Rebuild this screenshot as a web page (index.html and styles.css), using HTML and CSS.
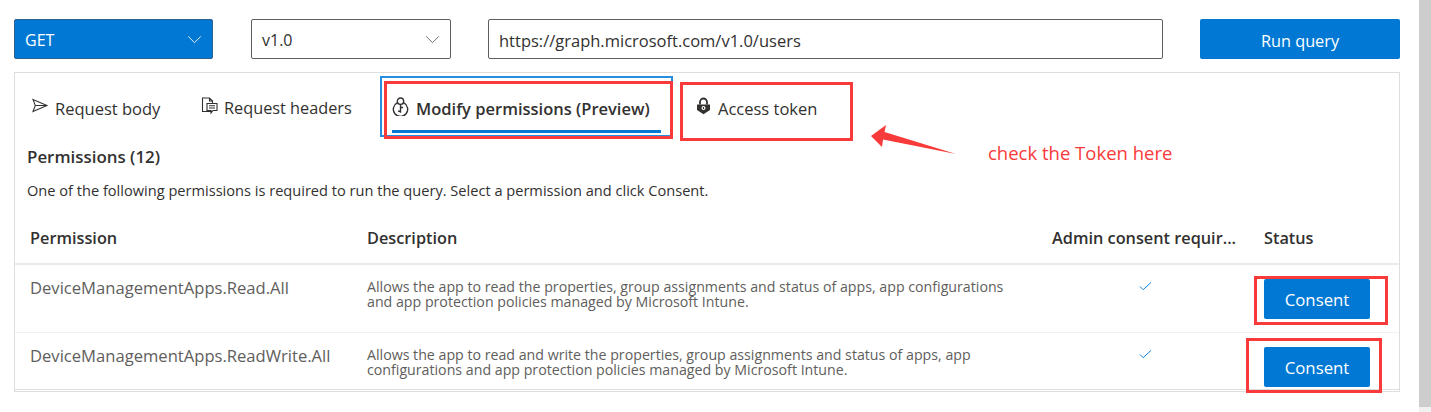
FILE: index.html
```html
<!DOCTYPE html>
<html lang="en">
<head>
<meta charset="utf-8">
<title>Graph Explorer</title>
<link rel="stylesheet" href="styles.css">
</head>
<body>
<div class="page">
  <main class="main">
    <div class="toolbar">
      <div class="select select-get"><span>GET</span><svg class="chev" viewBox="0 0 16 10"><path d="M1 1.5l7 7 7-7"/></svg></div>
      <div class="select select-ver"><span>v1.0</span><svg class="chev" viewBox="0 0 16 10"><path d="M1 1.5l7 7 7-7"/></svg></div>
      <div class="url">https://graph.microsoft.com/v1.0/users</div>
      <button class="run">Run query</button>
    </div>
    <section class="panel">
      <nav class="tabs">
        <div class="tab tab-body"><svg class="ico" viewBox="0 0 18 16"><path d="M1.500 1.500L16.500 8 1.500 14.500 4 8zM4 8h12.500"/></svg>Request body</div>
        <div class="tab tab-head"><svg class="ico" viewBox="0 0 17 17"><path d="M11 14.500H1.500V1h7l3 3v2M8.500 1v3h3M6 6.500h10v7h-4l-2 2.500v-2.500H6zM8 8.800h6M8 11h6"/></svg>Request headers</div>
        <div class="tab tab-perm"><svg class="ico ico-perm" viewBox="0 0 16 18"><path d="M4.800 5.600a6.800 6.800 0 1 0 6.400 0"/><circle cx="8" cy="4" r="3"/><path d="M8 7v8M8 10h2.300M8 13.500H5.700"/></svg>Modify permissions (Preview)</div>
        <div class="tab tab-token"><svg class="ico ico-lock" viewBox="0 0 15 17"><path class="solid" d="M1 7h13v5.500L7.500 16.700 1 12.500z"/><path d="M4 7V4.500a3.500 3.500 0 0 1 7 0V7"/><circle class="hole" cx="7.500" cy="10.500" r="2"/><path class="key" d="M7.500 9.500v2"/></svg>Access token</div>
      </nav>
      <h2 class="title">Permissions (12)</h2>
      <p class="hint">One of the following permissions is required to run the query. Select a permission and click Consent.</p>
      <div class="row row-head">
        <div class="c-perm">Permission</div>
        <div class="c-desc">Description</div>
        <div class="c-admin">Admin consent requir...</div>
        <div class="c-status">Status</div>
      </div>
      <div class="row row-data">
        <div class="c-perm">DeviceManagementApps.Read.All</div>
        <div class="c-desc">Allows the app to read the properties, group assignments and status of apps, app configurations and app protection policies managed by Microsoft Intune.</div>
        <div class="c-admin"><svg class="check" viewBox="0 0 14 10"><path d="M1 5.500l3.500 3.500L13 1"/></svg></div>
        <div class="c-status"><button class="consent">Consent</button></div>
      </div>
      <div class="row row-data row-last">
        <div class="c-perm">DeviceManagementApps.ReadWrite.All</div>
        <div class="c-desc">Allows the app to read and write the properties, group assignments and status of apps, app configurations and app protection policies managed by Microsoft Intune.</div>
        <div class="c-admin"><svg class="check" viewBox="0 0 14 10"><path d="M1 5.500l3.500 3.500L13 1"/></svg></div>
        <div class="c-status"><button class="consent">Consent</button></div>
      </div>
    </section>
  </main>
  <div class="scrollbar"><div class="thumb"></div></div>

  <div class="mark mark-blue"></div>
  <div class="mark mark-perm"></div>
  <div class="mark mark-token"></div>
  <div class="mark mark-c1"></div>
  <div class="mark mark-c2"></div>
  <svg class="arrow" viewBox="0 0 86 30"><path d="M0 11L15 0 13.500 7 85 29 12 14.500 11 22z"/></svg>
  <div class="note">check the Token here</div>
</div>
</body>
</html>
```
FILE: styles.css
```css
* { box-sizing: border-box; }
html, body { margin: 0; height: 100%; overflow: hidden; background: #fff; }
body { font-family: "Open Sans", "Noto Sans", sans-serif; color: #323130; }
.page { position: relative; display: flex; width: 1431px; height: 412px; }
.main { width: 1419px; padding: 19px 19px 0 14px; }
.scrollbar { width: 12px; height: 412px; background: #f1f1f1; }
.thumb { height: 407px; background: #cdcdcd; }

.toolbar { display: flex; height: 40px; margin-bottom: 13px; }
.select { display: flex; align-items: center; justify-content: space-between; height: 40px; padding-top: 1px; border-radius: 2px; font-size: 16px; }
.select-get { width: 199px; padding-left: 10px; padding-right: 10px; background: #0078d4; border: 1px solid #2b5f8c; color: #fff; }
.select-ver { width: 200px; margin-left: 38px; padding-left: 10px; padding-right: 10px; border: 1px solid #605e5c; background: #fff; }
.chev { width: 15px; height: 9px; fill: none; stroke: currentColor; stroke-width: 1; }
.select-ver .chev { stroke: #605e5c; }
.url { display: flex; align-items: center; width: 675px; height: 40px; margin-left: 37px; padding: 2px 10px 0; border: 1px solid #605e5c; border-radius: 2px; font-size: 16.500px; }
.run { width: 200px; height: 40px; margin-left: 37px; padding: 3px 0 0; border: 0; border-radius: 2px; background: #0078d4; color: #fff; font: 16.300px "Open Sans", sans-serif; }

.panel { width: 1386px; height: 320px; border: 1px solid #dedede; }
.tabs { display: flex; height: 72px; align-items: flex-start; padding-top: 23px; font-size: 16.500px; }
.tab { display: flex; align-items: center; height: 24px; white-space: nowrap; }
.ico { flex: none; fill: none; stroke: #323130; stroke-width: 1.100; }
.tab-body { margin-left: 16px; width: 170px; }
.tab-body .ico { width: 18px; height: 15px; margin-right: 6px; margin-top: -5px; }
.tab-head { width: 191px; font-size: 16.300px; }
.tab-head .ico { width: 17px; height: 17px; margin-right: 6px; margin-top: -5px; }
.tab-perm { width: 294px; margin-right: 10px; font-weight: 600; position: relative; }
.tab-perm::after { content: ""; position: absolute; left: 0; right: 25px; bottom: -13px; height: 3px; background: #0078d4; }
.ico-perm { width: 17px; height: 19px; margin-right: 7px; margin-top: -4px; stroke-width: 1.300; }
.ico-lock { width: 15px; height: 18px; margin-right: 7px; margin-top: -4px; stroke-width: 1.800; }
.ico-lock .solid { fill: #323130; stroke: none; }
.ico-lock .hole { fill: #fff; stroke: none; }
.ico-lock .key { stroke-width: 1.200; }

.title { margin: 0 0 0 12px; font-size: 16.900px; line-height: 24px; font-weight: 600; }
.hint { margin: 12px 0 0 12px; font-size: 14.600px; line-height: 18px; color: #323130; }

.row { display: grid; grid-template-columns: 337px 685px 212px 1fr; padding-left: 15px; }
.row-head { height: 66px; align-items: center; padding-top: 14px; font-size: 16.300px; font-weight: 600; border-bottom: 2px solid #eaeaea; }
.row-data { height: 68px; border-bottom: 1px solid #f1f1f1; position: relative; }
.row-last { height: 57px; border-bottom: 1px solid #dedede; }
.row-data .c-perm { padding-top: 11px; font-size: 16.600px; line-height: 24px; color: #605e5c; white-space: nowrap; }
.row-data .c-desc { padding: 14px 38px 0 0; font-size: 14.200px; line-height: 15px; color: #605e5c; }
.row-data .c-admin { padding: 16px 0 0 87px; }
.row-data .c-status { padding-top: 14px; }
.check { display: block; width: 13px; height: 10px; fill: none; stroke: #0078d4; stroke-width: 1; }
.consent { display: block; width: 106px; height: 40px; padding: 0; border: 0; border-radius: 2px; background: #0078d4; color: #fff; font: 16.800px "Open Sans", sans-serif; }

.mark { position: absolute; border: 3px solid #f93a3a; }
.mark-blue { left: 380px; top: 76px; width: 293px; height: 61px; border: 2px solid #2a8ddb; }
.mark-perm { left: 384px; top: 81px; width: 289px; height: 58px; }
.mark-token { left: 680px; top: 82px; width: 173px; height: 59px; }
.mark-c1 { left: 1254px; top: 276px; width: 134px; height: 49px; }
.mark-c2 { left: 1246px; top: 338px; width: 136px; height: 55px; }
.arrow { position: absolute; left: 871px; top: 125px; width: 86px; height: 30px; fill: #f93a3a; }
.note { position: absolute; left: 988px; top: 141px; font-size: 18.500px; line-height: 24px; color: #f93a3a; }
```
